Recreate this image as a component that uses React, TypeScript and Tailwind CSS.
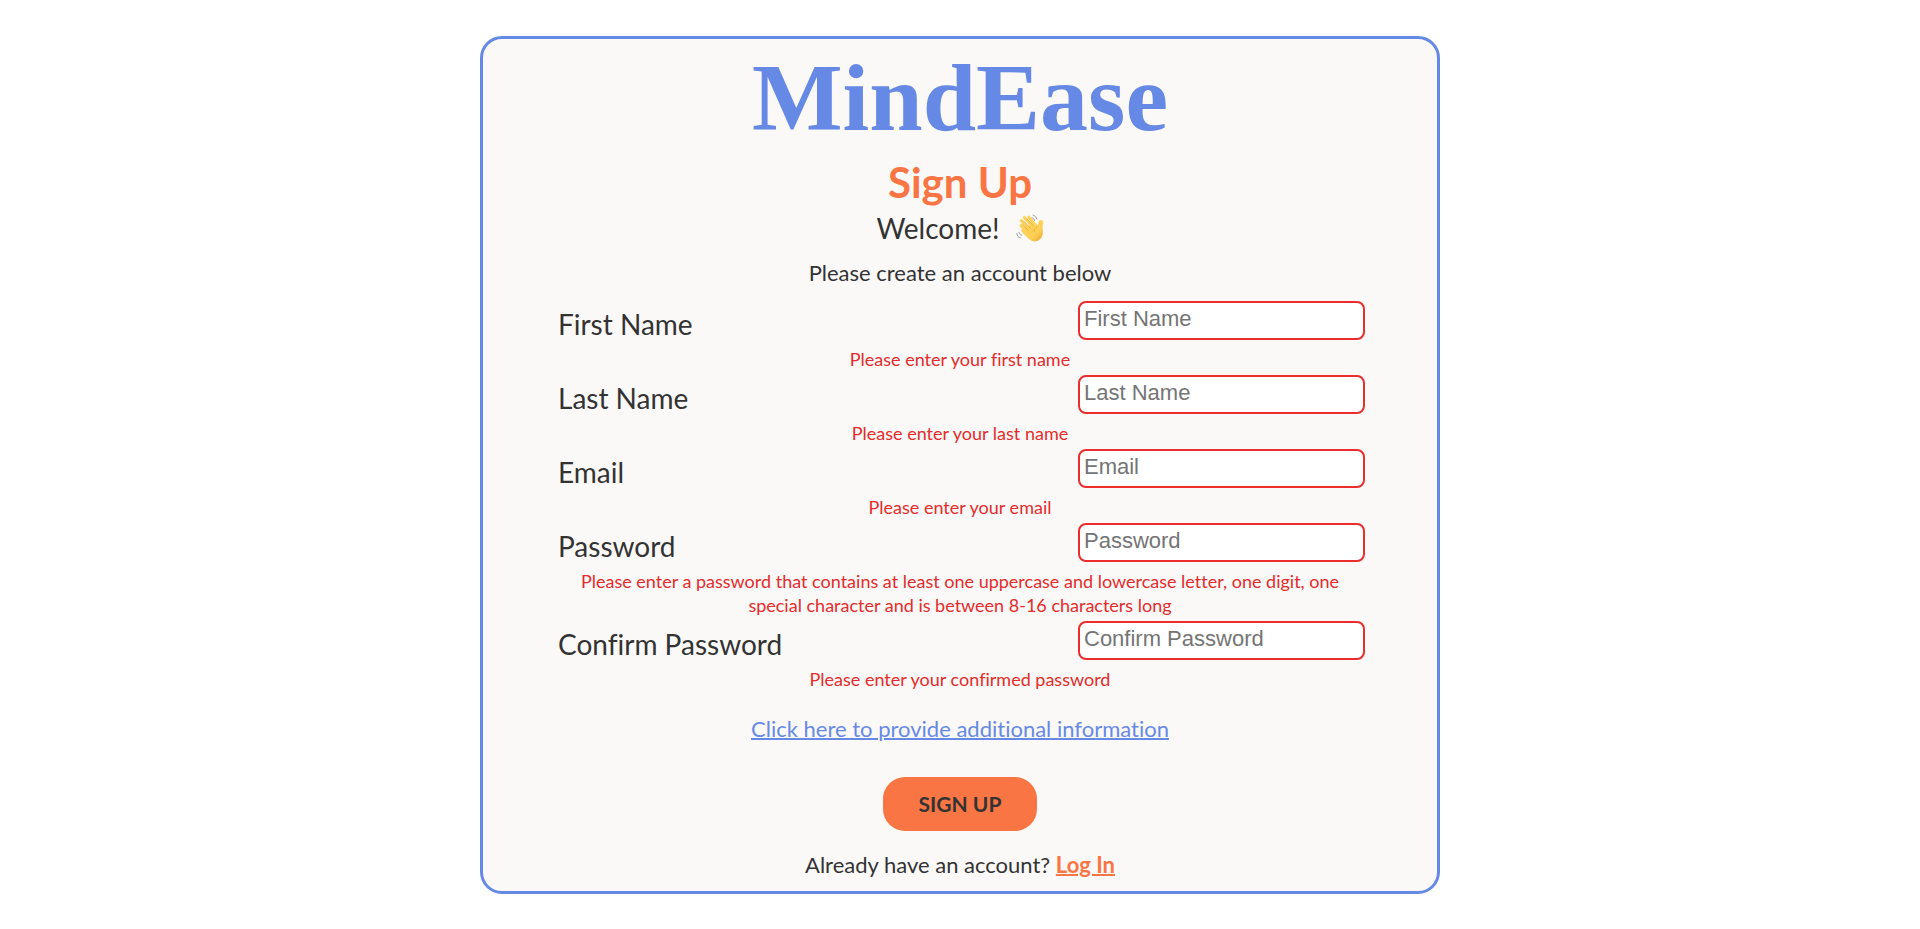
type Field = {
  id: string;
  label: string;
  type: string;
  error: string;
};

const fields: Field[] = [
  { id: "firstName", label: "First Name", type: "text", error: "Please enter your first name" },
  { id: "lastName", label: "Last Name", type: "text", error: "Please enter your last name" },
  { id: "email", label: "Email", type: "email", error: "Please enter your email" },
  {
    id: "password",
    label: "Password",
    type: "password",
    error:
      "Please enter a password that contains at least one uppercase and lowercase letter, one digit, one special character and is between 8-16 characters long",
  },
  {
    id: "confirmPassword",
    label: "Confirm Password",
    type: "password",
    error: "Please enter your confirmed password",
  },
];

function WavingHand() {
  return (
    <svg viewBox="0 0 28 28" className="size-7" aria-hidden="true">
      <defs>
        <linearGradient id="skin" x1="0" y1="0" x2="1" y2="1">
          <stop offset="0" stopColor="#ffd45e" />
          <stop offset="0.65" stopColor="#fdd055" />
          <stop offset="1" stopColor="#e8a02f" />
        </linearGradient>
      </defs>
      <g fill="none" stroke="#fdd25a" strokeWidth="3" strokeLinecap="round">
        <path d="M5 11.600 13.500 20" />
        <path d="M5.200 6.600 15 17" />
        <path d="M8.400 3.400 18 14.500" />
        <path d="M12.800 3.200 20 12" />
      </g>
      <path
        d="M6.500 14.800 17 9.200l4.200 3c.9-1.700 1-3.200 1.500-4.800.5-1.700 4.300-1.700 4.600.2.200 1.600-.8 3-.8 5.400 0 3.300.9 5.600-.2 8.600-1.600 4.800-6.200 6.900-10.400 5.200-2.400-1-4.900-3.800-9.600-8.400-1.500-1.500-1.700-2.500.2-3.600Z"
        fill="url(#skin)"
      />
      <g fill="none" stroke="#d99a2b" strokeWidth="0.6" strokeLinecap="round">
        <path d="m6.500 10.500 5.800 6M7.800 7.100l6.800 7.200M11.200 4.900l6 6.700" />
        <path d="M21.200 12.500c-2.600 1.300-3.400 3-3.200 5.200" />
      </g>
      <g fill="none" stroke="#9b9b9b" strokeWidth="1" strokeLinecap="round">
        <path d="M17.200 1.200c1.900.5 3.100 1.800 3.500 3.800M16 3.800c1.300.4 2.200 1.300 2.500 2.700M.8 19.500c.2 2.200 1.400 3.800 3.500 4.400M3 18.300c.2 1.500 1.100 2.500 2.600 2.900" />
      </g>
    </svg>
  );
}

function FormRow({ field }: { field: Field }) {
  return (
    <div>
      <div className="flex h-[50px] items-start justify-between pt-1">
        <label htmlFor={field.id} className="pl-[3px] text-[28px] leading-[46px]">
          {field.label}
        </label>
        <input
          id={field.id}
          type={field.type}
          placeholder={field.label}
          aria-invalid="true"
          aria-describedby={`${field.id}-error`}
          className="h-[39px] w-[287px] rounded-lg border-2 border-[#eb2d2d] bg-white px-1 pb-1 font-['Liberation_Sans',Arial,sans-serif] text-[22px] placeholder:text-[#757575]"
        />
      </div>
      <p id={`${field.id}-error`} className="px-5 text-center text-lg leading-6 text-[#e52b2b]">
        {field.error}
      </p>
    </div>
  );
}

export default function App() {
  return (
    <main className="min-h-screen bg-white py-9 font-['Lato',sans-serif] text-[#333] [font-variant-ligatures:none]">
      <section className="mx-auto w-1/2 min-w-[640px] rounded-[22px] border-3 border-[#6689e5] bg-[#fbf9f8] px-[72px] pt-2 pb-2">
        <header className="flex flex-col items-center">
          <h1 className="font-['Liberation_Serif',serif] text-8xl leading-[102px] font-bold text-[#6689e5]">
            MindEase
          </h1>
          <h2 className="mt-2 text-[42px] leading-[50px] font-bold text-[#f97544]">Sign Up</h2>
          <p className="flex items-center gap-4 text-[28px] leading-[42px]">
            Welcome!
            <WavingHand />
          </p>
          <p className="mt-1 text-[22px] leading-10">Please create an account below</p>
        </header>
        <form className="mt-1" onSubmit={(e) => e.preventDefault()} noValidate>
          {fields.map((field) => (
            <FormRow key={field.id} field={field} />
          ))}
          <div className="mt-5 flex flex-col items-center">
            <a href="#additional" className="text-[22px] leading-9 text-[#6689e5] underline decoration-2">
              Click here to provide additional information
            </a>
            <button
              type="submit"
              className="mt-[30px] h-[54px] rounded-[22px] bg-[#f97544] px-9 text-[21px] font-bold text-[#333]"
            >
              SIGN UP
            </button>
          </div>
        </form>
        <p className="mt-4 text-center text-[22px] leading-9">
          Already have an account?{" "}
          <a href="#login" className="font-bold text-[#f97544] underline decoration-2">
            Log In
          </a>
        </p>
      </section>
    </main>
  );
}
